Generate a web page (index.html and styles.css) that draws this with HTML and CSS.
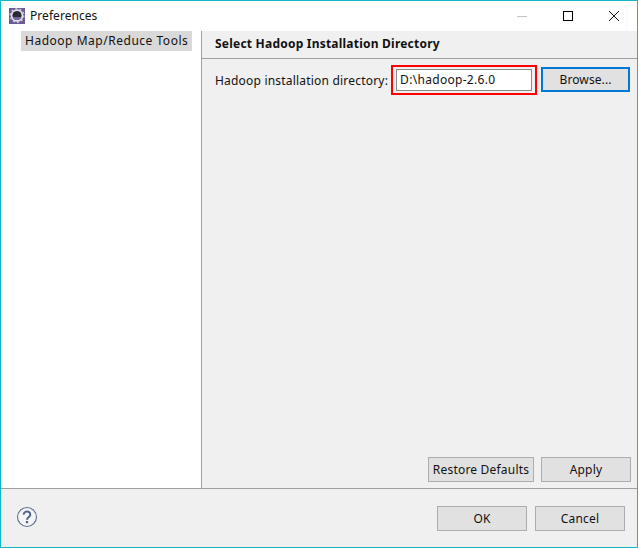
FILE: index.html
```html
<!DOCTYPE html>
<html lang="en">
<head>
<meta charset="utf-8">
<title>Preferences</title>
<link rel="stylesheet" href="styles.css">
</head>
<body>
<div class="window">
  <header class="titlebar">
    <svg class="app-icon" width="16" height="16" viewBox="0 0 16 16" aria-hidden="true">
      <rect width="16" height="16" fill="#6a5a96"/>
      <circle cx="8" cy="7.500" r="6.300" fill="#e2e2e6"/>
      <circle cx="8" cy="7.500" r="6.800" fill="none" stroke="#c8c8d0" stroke-width="1.400" stroke-dasharray="2 2.300"/>
      <circle cx="8" cy="7.500" r="4.600" fill="#2b2b38"/>
      <path d="M3.700 9a4.600 4.600 0 0 0 8.600 0z" fill="#75659f"/>
    </svg>
    <span class="title">Preferences</span>
    <div class="controls">
      <svg class="ctl" width="46" height="30" viewBox="0 0 46 30" aria-hidden="true"><path d="M18 15.500h10" stroke="#c4c4c4" fill="none"/></svg>
      <svg class="ctl" width="46" height="30" viewBox="0 0 46 30" aria-hidden="true"><rect x="18.500" y="10.500" width="9" height="9" fill="none" stroke="#000"/></svg>
      <svg class="ctl" width="46" height="30" viewBox="0 0 46 30" aria-hidden="true"><path d="M18 10l10 10M28 10L18 20" stroke="#111" fill="none"/></svg>
    </div>
  </header>
  <main class="body">
    <nav class="sidebar">
      <div class="nav-item">Hadoop Map/Reduce Tools</div>
    </nav>
    <section class="panel">
      <h1 class="panel-title">Select Hadoop Installation Directory</h1>
      <div class="panel-content">
        <div class="field-row">
          <label class="field-label">Hadoop installation directory:</label>
          <div class="highlight"><div class="text-input">D:\hadoop-2.6.0</div></div>
          <button class="btn btn-browse">Browse...</button>
        </div>
      </div>
      <div class="panel-actions">
        <button class="btn btn-restore">Restore Defaults</button>
        <button class="btn btn-apply">Apply</button>
      </div>
    </section>
  </main>
  <footer class="footer">
    <svg class="help" width="22" height="22" viewBox="0 0 22 22" aria-hidden="true">
      <circle cx="11" cy="11" r="9.500" fill="#f4f4f6" stroke="#5f7092" stroke-width="1.100"/>
      <path d="M7.700 8.600a3.300 3 0 1 1 5.400 2.200c-1.300 1-2.100 1.500-2.100 3" fill="none" stroke="#4f6288" stroke-width="2"/>
      <rect x="9.900" y="15" width="2.200" height="2.200" fill="#4f6288"/>
    </svg>
    <div class="footer-actions">
      <button class="btn btn-dialog">OK</button>
      <button class="btn btn-dialog">Cancel</button>
    </div>
  </footer>
</div>
</body>
</html>
```
FILE: styles.css
```css
* { box-sizing: border-box; }
html, body { margin: 0; height: 100%; }
body { font-family: "Noto Sans", "Open Sans", sans-serif; font-size: 12px; color: #111; background: #fff; }
.window { width: 638px; height: 548px; border: 1px solid #13b6c4; display: flex; flex-direction: column; background: #fff; }
.titlebar { height: 30px; flex: none; display: flex; align-items: center; padding-left: 8px; background: #fff; }
.app-icon { flex: none; margin-top: -1px; }
.title { margin-left: 5px; font-size: 12px; margin-top: -2px; letter-spacing: .05px; }
.controls { margin-left: auto; display: flex; margin-right: 0; }
.ctl { display: block; }
.body { flex: 1; display: flex; min-height: 0; border-bottom: 1px solid #a0a0a0; }
.sidebar { width: 201px; flex: none; background: #fff; padding: 0 9px 0 20px; border-right: 1px solid #a0a0a0; }
.nav-item { height: 20px; line-height: 20px; background: #d9d9d9; padding-left: 4px; white-space: nowrap; letter-spacing: .52px; }
.panel { flex: 1; display: flex; flex-direction: column; background: #f0f0f0; min-width: 0; }
.panel-title { margin: 0; height: 28px; line-height: 25px; font-size: 12px; font-weight: 700; padding-left: 13px; border-bottom: 1px solid #a0a0a0; letter-spacing: .22px; }
.panel-content { flex: 1; padding: 6px 7px 0 13px; }
.field-row { display: flex; align-items: center; }
.field-label { white-space: nowrap; letter-spacing: .2px; }
.highlight { margin-left: 3px; width: 146px; height: 30px; border: 2px solid #f00; padding: 2px 3px; flex: none; }
.text-input { height: 22px; line-height: 19px; background: #fff; border: 1px solid #8a8a8a; padding-left: 3px; letter-spacing: .3px; }
.btn { font: inherit; color: #111; background: #e1e1e1; border: 1px solid #adadad; padding: 0; display: block; }
.btn-browse { margin-left: 4px; width: 90px; height: 25px; border: 2px solid #0078d7; letter-spacing: .1px; align-self: flex-start; margin-top: 2px; }
.panel-actions { display: flex; justify-content: flex-end; gap: 7px; padding: 1px 6px 0 0; height: 32px; flex: none; }
.btn-restore { width: 106px; height: 25px; letter-spacing: .2px; }
.btn-apply { width: 90px; height: 25px; letter-spacing: .2px; }
.footer { height: 58px; flex: none; display: flex; align-items: center; background: #f0f0f0; padding: 0 6px 0 15px; }
.help { flex: none; margin-top: -2px; }
.footer-actions { margin-left: auto; display: flex; gap: 8px; margin-right: 6px; }
.btn-dialog { width: 90px; height: 25px; letter-spacing: .2px; }
```
